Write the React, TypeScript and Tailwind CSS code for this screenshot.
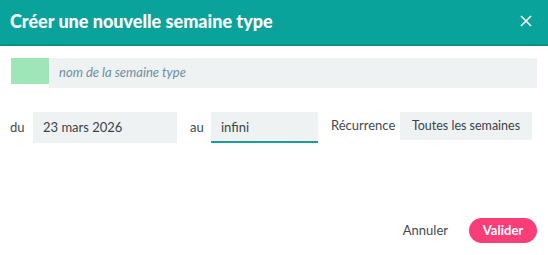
import React from "react";

export default function App() {
  return (
    <div className="w-[548px] h-[255px] bg-white flex flex-col" style={{ fontFamily: "Lato, 'Open Sans', sans-serif" }}>
      <div className="h-[46px] bg-[#0aa39b] border-b-2 border-[#089189] flex items-center justify-between pl-[10px] pr-[16px]">
        <div className="text-white text-[18px] font-black pb-[2px]" style={{ fontFamily: "Lato, sans-serif" }}>
          Créer une nouvelle semaine type
        </div>
        <svg width="12" height="12" viewBox="0 0 12 12" className="mb-[3px]">
          <path d="M1 1L11 11M11 1L1 11" stroke="white" strokeWidth="1.6" />
        </svg>
      </div>
      <div className="pl-[11px] pr-[11px] pt-[12px] flex">
        <div className="w-[38px] h-[26px] bg-[#9ee6b8]" />
        <div className="flex-1 h-[30px] bg-[#eff2f3] flex items-center pl-[10px] text-[13px] italic text-[#6e8fa0]">
          nom de la semaine type
        </div>
      </div>
      <div className="flex items-start pl-[10px] pt-[24px] text-[13px] text-[#3f4a51]">
        <div className="pt-[6px] w-[23px]">du</div>
        <div className="w-[144px] h-[31px] bg-[#eff2f3] flex items-center pl-[10px] text-[#39434a]">23 mars 2026</div>
        <div className="pt-[6px] pl-[13px] w-[34px]">au</div>
        <div className="w-[107px] h-[31px] bg-[#eff2f3] border-b-2 border-[#1a9e96] flex items-center pl-[10px] pt-[2px] text-[#39434a]">infini</div>
        <div className="pl-[13px] w-[82px] h-[28px] flex items-center">Récurrence</div>
        <div className="w-[132px] h-[28px] bg-[#eff2f3] flex items-center justify-center text-[#39434a] text-[12.5px]">Toutes les semaines</div>
      </div>
      <div className="flex-1" />
      <div className="flex items-center justify-end pr-[11px] pb-[12px] gap-[21px]">
        <div className="text-[13px] text-[#3f4a51]">Annuler</div>
        <div className="w-[68px] h-[25px] rounded-full bg-[#f93d78] text-white text-[13px] font-bold flex items-center justify-center">Valider</div>
      </div>
    </div>
  );
}
